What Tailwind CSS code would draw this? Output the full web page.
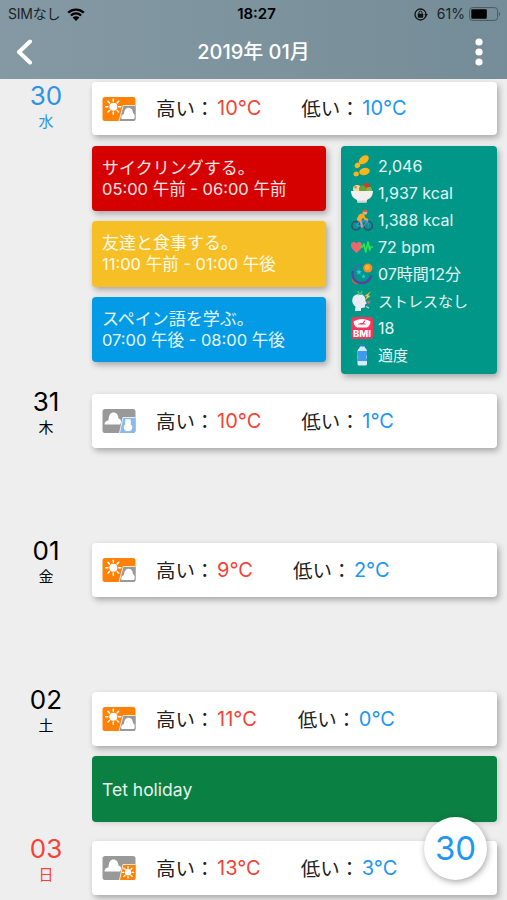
<!DOCTYPE html>
<html lang="ja">
<head>
    <meta charset="UTF-8">
    <meta name="viewport" content="width=device-width" />
    <title>2019年 01月</title>
    <script src="https://cdn.jsdelivr.net/npm/@tailwindcss/browser@4"></script>
</head>
<body class="bg-[#eeeeee] font-['Inter','Noto_Sans_CJK_JP',sans-serif] h-[900px] overflow-hidden relative">

<!-- Weather icons shared by the rows -->
<svg class="hidden">
    <symbol id="sun-cloud" viewBox="0 0 33 24">
        <rect width="33" height="24" rx="2.5" fill="#ff8206"/>
        <circle cx="10.800" cy="9.700" r="4" fill="#fff"/>
        <path d="M10.800 4.300V2.200M10.800 15.100V17.200M5.400 9.700H3.300M16.200 9.700H18.300M7 5.900L5.500 4.400M14.600 5.900L16.100 4.400M7 13.500L5.500 15M14.600 13.500L16.100 15" stroke="#fff" stroke-width="1.500" stroke-linecap="round"/>
        <path d="M20.500 8.500H33V21.500a2.500 2.500 0 0 1-2.500 2.500H16.500z" fill="#999"/>
        <path d="M33 8.500H20.700L16.500 24" fill="none" stroke="#fbe3cc" stroke-width="1"/>
        <path d="M19 22c-.8-2.300.2-4.500 2.500-5 .2-3.700 1.800-6.300 4.600-6.300s4.300 2.200 4.400 5.300c1.700.8 2.200 3.500 1.200 6z" fill="#fff"/>
    </symbol>
    <symbol id="cloud-snow" viewBox="0 0 33 24">
        <rect width="33" height="24" rx="2.500" fill="#999"/>
        <path d="M2 15.500c0-2.700 1.800-4 4-4C6.200 6 8 3.500 11 3.500s4.700 2.300 5 6c1.700.3 2.700 1.500 2.700 3.500l-1 2.500z" fill="#fff"/>
        <path d="M20.200 8.500H33V21.500a2.500 2.500 0 0 1-2.500 2.500H17z" fill="#8cb9ec"/>
        <path d="M33 8.500H20.500L17 24" fill="none" stroke="#e6eef7" stroke-width="1"/>
        <circle cx="25.500" cy="13.500" r="2.900" fill="#fff"/>
        <ellipse cx="25.500" cy="18.500" rx="4.200" ry="3.700" fill="#fff"/>
        <path d="M22.500 10.900h6" stroke="#fff" stroke-width="1"/>
    </symbol>
    <symbol id="cloud-sun" viewBox="0 0 33 24">
        <rect width="33" height="24" rx="2.500" fill="#999"/>
        <path d="M2 15.500c0-2.700 1.800-4 4-4C6.200 6 8 3.500 11 3.500s4.700 2.300 5 6c1.700.3 2.700 1.500 2.700 3.500l-1 2.500z" fill="#fff"/>
        <path d="M20.200 8.500H33V21.500a2.500 2.500 0 0 1-2.500 2.500H17z" fill="#ff8206"/>
        <path d="M33 8.500H20.500L17 24" fill="none" stroke="#f6e6d8" stroke-width="1"/>
        <circle cx="25.500" cy="16.300" r="3.200" fill="#fff"/>
        <path d="M25.500 12.300V10.500M25.500 20.300V22.100M21.500 16.300H19.700M29.500 16.300H31.300M22.700 13.500L21.300 12.100M28.300 13.500L29.700 12.100M22.700 19.100L21.300 20.500M28.300 19.100L29.700 20.500" stroke="#fff" stroke-width="1.200" stroke-linecap="round"/>
    </symbol>
</svg>

<!-- Status bar and title -->
<header class="h-[79px] bg-linear-to-r from-[#8499a4] via-[#7d939e] to-[#758d98]">
    <div class="grid grid-cols-3 items-center h-7 pl-2 pr-[6px] text-black">
        <div class="flex items-center gap-[7px] text-[14px] text-[#1b2225]">
            <span class="leading-5 tracking-[-0.2px]">SIMなし</span>
            <svg class="w-[18px] h-[13px]" viewBox="0 0 18 13">
                <path d="M1.200 4.700a11.200 11.200 0 0 1 15.600 0M3.900 7.500a7.300 7.300 0 0 1 10.200 0" fill="none" stroke="#000" stroke-width="2.300"/>
                <path d="M9 13L5.600 9.600a4.900 4.900 0 0 1 6.800 0z" fill="#000"/>
            </svg>
        </div>
        <div class="text-center text-[15px] leading-5 font-semibold pl-1">18:27</div>
        <div class="flex items-center justify-end text-[14px] text-[#1b2225]">
            <svg class="w-[14px] h-[13px] mr-[9px]" viewBox="0 0 14 13">
                <circle cx="6.500" cy="6.500" r="5.500" fill="none" stroke="#111" stroke-width="1.300"/>
                <path d="M10.300 6h3.600l-1.800 2.700z" fill="#111"/>
                <rect x="3.800" y="5.700" width="5.400" height="4" rx=".6" fill="#111"/>
                <path d="M4.900 6V4.700a1.600 1.600 0 0 1 3.200 0V6" fill="none" stroke="#111" stroke-width="1"/>
            </svg>
            <span class="leading-5 mr-1">61%</span>
            <svg class="w-[32px] h-[14px]" viewBox="0 0 32 14">
                <rect x=".6" y=".6" width="28" height="12.800" rx="3" fill="none" stroke="#4b585e" stroke-width="1"/>
                <rect x="2.300" y="2.300" width="15.500" height="9.400" rx="1" fill="#000"/>
                <path d="M30 5v4c1.500-.5 1.500-3.500 0-4z" fill="#4b585e"/>
            </svg>
        </div>
    </div>
    <div class="grid grid-cols-3 items-center h-[48px] pl-4 pr-[24px] text-white">
        <svg class="w-[17px] h-[26px]" viewBox="0 0 17 26">
            <path d="M14 2.500L3 13l11 10.500" fill="none" stroke="#fff" stroke-width="4" stroke-linecap="round" stroke-linejoin="round"/>
        </svg>
        <h1 class="text-center text-[20px] leading-6 font-medium whitespace-nowrap pl-2">2019年 01月</h1>
        <svg class="w-[8px] h-[28px] justify-self-end" viewBox="0 0 8 28">
            <circle cx="4" cy="4" r="3.600" fill="#fff"/>
            <circle cx="4" cy="14" r="3.600" fill="#fff"/>
            <circle cx="4" cy="24" r="3.600" fill="#fff"/>
        </svg>
    </div>
</header>

<main class="text-[#212121]">
    <!-- 30 (Wed) -->
    <section class="flex h-[312px] pr-[10px]">
        <div class="w-[92px] shrink-0 text-center text-[#2e93e6] pt-[2px]">
            <div class="text-[26px] leading-[30px]">30</div>
            <div class="text-[15px] leading-[22px]">水</div>
        </div>
        <div class="flex-1 pt-[3px]">
            <div class="flex items-center h-[53px] pl-[10px] rounded-[4px] bg-white shadow-[2px_3px_6px_rgba(0,0,0,0.3)]">
                <svg class="w-[34px] h-[24px] mr-5"><use href="#sun-cloud"/></svg>
                <div class="flex items-center gap-[40px] text-[20px] leading-6">
                    <div class="flex"><span class="w-[61px] pt-px text-[19.5px] whitespace-nowrap">高い：</span><span class="text-[#f44336]">10°C</span></div>
                    <div class="flex"><span class="w-[61px] pt-px text-[19.5px] whitespace-nowrap">低い：</span><span class="text-[#2196f3]">10°C</span></div>
                </div>
            </div>
            <div class="flex gap-[15px] pt-[10.500px]">
                <div class="flex flex-col gap-[10px] w-[234px] text-[17px] leading-[21px] text-white/90">
                    <div class="h-[65.500px] pl-[10px] pt-[12px] rounded-[4px] bg-[#d50000] shadow-[2px_3px_6px_rgba(0,0,0,0.3)]">
                        <p>サイクリングする。</p>
                        <p class="text-[16.5px]">05:00 午前 - 06:00 午前</p>
                    </div>
                    <div class="h-[65.500px] pl-[10px] pt-[12px] rounded-[4px] bg-[#f6bf26] shadow-[2px_3px_6px_rgba(0,0,0,0.3)]">
                        <p>友達と食事する。</p>
                        <p class="text-[16.5px]">11:00 午前 - 01:00 午後</p>
                    </div>
                    <div class="h-[65.500px] pl-[10px] pt-[12px] rounded-[4px] bg-[#039be5] shadow-[2px_3px_6px_rgba(0,0,0,0.3)]">
                        <p>スペイン語を学ぶ。</p>
                        <p class="text-[16.5px]">07:00 午後 - 08:00 午後</p>
                    </div>
                </div>

                <!-- Health summary -->
                <ul class="flex-1 h-[228.500px] pl-[10px] pt-[7px] rounded-[4px] bg-[#009688] text-[16px] leading-[27px] text-white/90 shadow-[2px_3px_6px_rgba(0,0,0,0.3)]">
                    <li class="flex items-center gap-[5px] h-[27px]">
                        <svg class="w-[22px] h-[22px]" viewBox="0 0 22 22" fill="#fbb51c">
                            <ellipse cx="12.800" cy="4.800" rx="5.600" ry="3.700" transform="rotate(-38 12.800 4.800)"/>
                            <ellipse cx="6.500" cy="10.300" rx="3" ry="2.500" transform="rotate(-38 6.500 10.300)"/>
                            <ellipse cx="13.500" cy="16.500" rx="5.400" ry="3.500" transform="rotate(-14 13.500 16.500)"/>
                            <ellipse cx="5.200" cy="19" rx="2.700" ry="2.400" transform="rotate(-14 5.200 19)"/>
                        </svg>
                        <span>2,046</span>
                    </li>
                    <li class="flex items-center gap-[5px] h-[27px]">
                        <svg class="w-[22px] h-[22px]" viewBox="0 0 22 22">
                            <circle cx="6" cy="7" r="4" fill="#f6d9a0"/>
                            <circle cx="15.500" cy="4.500" r="3.500" fill="#d8392f"/>
                            <circle cx="11.500" cy="7" r="3.500" fill="#67a437"/>
                            <circle cx="18" cy="8" r="3" fill="#7fb544"/>
                            <circle cx="4.500" cy="5" r="1.500" fill="#e58a5f"/>
                            <path d="M0 9h22c0 4.500-2.500 7.500-6 9l-.5 2.500h-9L6 18C2.500 16.500 0 13.500 0 9z" fill="#f2f0ee"/>
                            <path d="M6.500 18.500h9v2h-9z" fill="#d8d4d2"/>
                        </svg>
                        <span>1,937 kcal</span>
                    </li>
                    <li class="flex items-center gap-[5px] h-[27px]">
                        <svg class="w-[22px] h-[22px]" viewBox="0 0 22 22" fill="none">
                            <circle cx="5" cy="16.800" r="4.200" stroke="#3d4b66" stroke-width="1.500"/>
                            <circle cx="17.200" cy="16.800" r="4.200" stroke="#3d4b66" stroke-width="1.500"/>
                            <path d="M5 16.800l4-5 3.500 5.500 4-6 1 5.500M9 12h7.500M5 16.800h7" stroke="#3e8fd6" stroke-width="1.300"/>
                            <path d="M6 10l4 2.500 1 6" stroke="#e0a080" stroke-width="2"/>
                            <path d="M6 9.500C7 6 9.500 4 12.500 4.500L13.500 7 9.500 12z" fill="#fbab1f"/>
                            <path d="M12 6l2 4 3 1" stroke="#fbab1f" stroke-width="2"/>
                            <circle cx="14" cy="3.500" r="2.300" fill="#e7ab85"/>
                            <path d="M11 2.800C11.500.3 16-.6 17 2.800z" fill="#cf5b3d"/>
                        </svg>
                        <span>1,388 kcal</span>
                    </li>
                    <li class="flex items-center gap-[5px] h-[27px]">
                        <svg class="w-[22px] h-[22px]" viewBox="0 0 22 22" fill="none">
                            <path d="M5.500 17C1.500 14 0 11.500 0 9c0-3.300 4-4.200 5.500-1.500C7 4.800 11 5.700 11 9c0 2.500-1.500 5-5.500 8z" fill="#f0666e"/>
                            <path d="M8.500 11h3l1.500-3 1.700 8L17 6l1.700 8 1-3H22" stroke="#2fe052" stroke-width="1.700" stroke-linejoin="round"/>
                        </svg>
                        <span>72 bpm</span>
                    </li>
                    <li class="flex items-center gap-[5px] h-[27px]">
                        <svg class="w-[22px] h-[22px]" viewBox="0 0 22 22" fill="none">
                            <path d="M10.500 2A9 9 0 0 0 1.500 10.500" stroke="#4267b8" stroke-width="2" stroke-dasharray="3 1"/>
                            <path d="M2 8c-1.500 7 2.500 12 8.500 12 5 0 8.500-3 9.500-7.500" stroke="#57439b" stroke-width="2.400"/>
                            <path d="M1 16.500c1 2.500 3 4 5.500 4.300" stroke="#e55d3d" stroke-width="1.300"/>
                            <circle cx="16.800" cy="5" r="4.600" fill="#f68b2c"/>
                            <circle cx="16.300" cy="4.500" r="2.500" fill="#fbb52c"/>
                            <path d="M8 6l.8 2 2 .3-1.500 1.300.4 2L8 10.500l-1.700 1.100.4-2L5.200 8.300l2-.3zM12.500 11l.6 1.500 1.500.2-1.100 1 .3 1.500-1.300-.8-1.300.8.300-1.500-1.100-1 1.500-.2z" fill="#3cc0ee"/>
                        </svg>
                        <span>07時間12分</span>
                    </li>
                    <li class="flex items-center gap-[5px] h-[27px]">
                        <svg class="w-[22px] h-[22px]" viewBox="0 0 22 22">
                            <path d="M4 21l.5-4.500C1 14 .3 9.500 2.500 6.500 5 3.300 11 3 13.500 6.500c1 1.500.7 3 1 4.500l1.300 2.500-1.600.7-.4 3.300-3.800.5V21z" fill="#e8ecf8"/>
                            <path d="M7 1l1.500 4M11 1L9.500 5" stroke="#39c67a" stroke-width="1.700"/>
                            <path d="M20.500 1l-7 5 2.500.5-2.500 4 6-4.500-2.500-.8z" fill="#f7c542"/>
                            <path d="M14.500 12l5-1.500-1 3.500z" fill="#f0626c"/>
                            <path d="M15 16.500l3 1.500" stroke="#ccd5ee" stroke-width="1.200"/>
                        </svg>
                        <span class="text-[15px]">ストレスなし</span>
                    </li>
                    <li class="flex items-center gap-[5px] h-[27px]">
                        <svg class="w-[22px] h-[22px]" viewBox="0 0 22 22">
                            <rect width="22" height="22" rx="3.500" fill="#f5365c"/>
                            <path d="M2.500 4.500c5-3.500 12-3.500 17 0-.3 3.500-2 6-4.500 6H7C4.500 10.500 2.800 8 2.500 4.500z" fill="#fff"/>
                            <path d="M7 7.500C8 5.500 14 5.500 15 7.500z" fill="#f5365c"/>
                            <path d="M11.500 7L14 3.500" stroke="#f5365c" stroke-width="1.200"/>
                            <text x="11" y="19.800" text-anchor="middle" font-size="9" font-weight="800" fill="#fff" textLength="18" lengthAdjust="spacingAndGlyphs">BMI</text>
                        </svg>
                        <span>18</span>
                    </li>
                    <li class="flex items-center gap-[5px] h-[27px]">
                        <svg class="w-[22px] h-[22px]" viewBox="0 0 22 22">
                            <rect x="9" y="0" width="4.500" height="2.500" rx=".6" fill="#2d7fd0"/>
                            <path d="M9 2.500h4.500c.3 2 2.500 2.500 2.500 4.500v13a1.500 1.500 0 0 1-1.500 1.500H8A1.500 1.500 0 0 1 6.500 20V7c0-2 2.200-2.500 2.500-4.500z" fill="#d4ecfa"/>
                            <path d="M6.500 7H16v4l-.7 2 .7 2v2H6.500v-2l.7-2-.7-2z" fill="#3e9be9"/>
                        </svg>
                        <span class="text-[15px]">適度</span>
                    </li>
                </ul>
            </div>
        </div>
    </section>

    <!-- 31 (Thu) -->
    <section class="flex h-[149px] pr-[10px]">
        <div class="w-[92px] shrink-0 text-center text-black">
            <div class="-mt-1 text-[26px] leading-[30px]">31</div>
            <div class="text-[15px] leading-[22px]">木</div>
        </div>
        <div class="flex-1 pt-[3px]">
            <div class="flex items-center h-[54px] pl-[10px] rounded-[4px] bg-white shadow-[2px_3px_6px_rgba(0,0,0,0.3)]">
                <svg class="w-[34px] h-[24px] mr-5"><use href="#cloud-snow"/></svg>
                <div class="flex items-center gap-[40px] text-[20px] leading-6">
                    <div class="flex"><span class="w-[61px] pt-px text-[19.5px] whitespace-nowrap">高い：</span><span class="text-[#f44336]">10°C</span></div>
                    <div class="flex"><span class="w-[61px] pt-px text-[19.5px] whitespace-nowrap">低い：</span><span class="text-[#2196f3]">1°C</span></div>
                </div>
            </div>
        </div>
    </section>

    <!-- 01 (Fri) -->
    <section class="flex h-[149px] pr-[10px]">
        <div class="w-[92px] shrink-0 text-center text-black">
            <div class="-mt-1 text-[26px] leading-[30px]">01</div>
            <div class="text-[15px] leading-[22px]">金</div>
        </div>
        <div class="flex-1 pt-[3px]">
            <div class="flex items-center h-[54px] pl-[10px] rounded-[4px] bg-white shadow-[2px_3px_6px_rgba(0,0,0,0.3)]">
                <svg class="w-[34px] h-[24px] mr-5"><use href="#sun-cloud"/></svg>
                <div class="flex items-center gap-[40px] text-[20px] leading-6">
                    <div class="flex"><span class="w-[61px] pt-px text-[19.5px] whitespace-nowrap">高い：</span><span class="text-[#f44336]">9°C</span></div>
                    <div class="flex"><span class="w-[61px] pt-px text-[19.5px] whitespace-nowrap">低い：</span><span class="text-[#2196f3]">2°C</span></div>
                </div>
            </div>
        </div>
    </section>

    <!-- 02 (Sat) -->
    <section class="flex h-[149px] pr-[10px]">
        <div class="w-[92px] shrink-0 text-center text-black">
            <div class="-mt-1 text-[26px] leading-[30px]">02</div>
            <div class="text-[15px] leading-[22px]">土</div>
        </div>
        <div class="flex-1 pt-[3px]">
            <div class="flex items-center h-[54px] pl-[10px] rounded-[4px] bg-white shadow-[2px_3px_6px_rgba(0,0,0,0.3)]">
                <svg class="w-[34px] h-[24px] mr-5"><use href="#sun-cloud"/></svg>
                <div class="flex items-center gap-[41px] text-[20px] leading-6">
                    <div class="flex"><span class="w-[61px] pt-px text-[19.5px] whitespace-nowrap">高い：</span><span class="text-[#f44336]">11°C</span></div>
                    <div class="flex"><span class="w-[61px] pt-px text-[19.5px] whitespace-nowrap">低い：</span><span class="text-[#2196f3]">0°C</span></div>
                </div>
            </div>
            <div class="flex items-center h-[66px] mt-[10px] pt-[2px] pl-[10px] rounded-[4px] bg-[#0b8043] text-[17.5px] text-white/90 shadow-[2px_1px_5px_rgba(0,0,0,0.15)]">Tet holiday</div>
        </div>
    </section>

    <!-- 03 (Sun) -->
    <section class="flex h-[62px] pr-[10px]">
        <div class="w-[92px] shrink-0 text-center text-[#f44336]">
            <div class="-mt-1 text-[26px] leading-[30px]">03</div>
            <div class="text-[15px] leading-[22px]">日</div>
        </div>
        <div class="flex-1 pt-[3px]">
            <div class="flex items-center h-[54px] pl-[10px] rounded-[4px] bg-white shadow-[2px_3px_6px_rgba(0,0,0,0.3)]">
                <svg class="w-[34px] h-[24px] mr-5"><use href="#cloud-sun"/></svg>
                <div class="flex items-center gap-[40px] text-[20px] leading-6">
                    <div class="flex"><span class="w-[61px] pt-px text-[19.5px] whitespace-nowrap">高い：</span><span class="text-[#f44336]">13°C</span></div>
                    <div class="flex"><span class="w-[61px] pt-px text-[19.5px] whitespace-nowrap">低い：</span><span class="text-[#2196f3]">3°C</span></div>
                </div>
            </div>
        </div>
    </section>
</main>

<!-- Jump to today button -->
<button class="absolute right-[20px] bottom-[20px] size-[63px] rounded-full bg-white text-[33px] leading-none text-[#2196f3] shadow-[1px_2px_6px_rgba(0,0,0,0.35)]">30</button>

</body>
</html>
